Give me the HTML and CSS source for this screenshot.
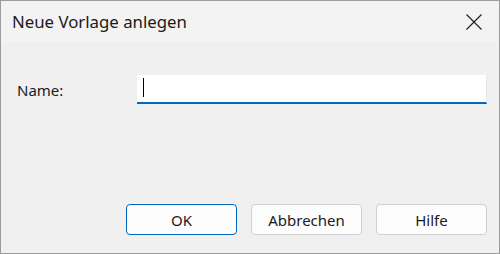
FILE: index.html
```html
<!DOCTYPE html>
<html lang="de">
<head>
    <meta charset="UTF-8">
    <meta name="viewport" content="width=device-width, initial-scale=1.0">
    <title>Neue Vorlage anlegen</title>
    <link rel="stylesheet" href="styles.css">
</head>
<body>

    <div class="dialog">

        <div class="titlebar">
            <span class="title">Neue Vorlage anlegen</span>
            <button class="close" type="button" aria-label="Schließen">
                <svg width="16" height="16" viewBox="0 0 16 16">
                    <path d="M0.5 0.5 L15.5 15.5 M15.5 0.5 L0.5 15.5" stroke="#1a1a1a" stroke-width="1.1" fill="none"/>
                </svg>
            </button>
        </div>

        <form class="content" action="#" method="post">
            <div class="field">
                <label for="name">Name:</label>
                <div class="input-box">
                    <span class="caret"></span>
                    <input type="text" name="name" id="name">
                </div>
            </div>

            <div class="buttons">
                <button type="submit" class="btn default">OK</button>
                <button type="button" class="btn">Abbrechen</button>
                <button type="button" class="btn">Hilfe</button>
            </div>
        </form>
    </div>

</body>
</html>
```

FILE: styles.css
```css
html, body{
    margin: 0;
    padding: 0;
}

body{
    font-family: "Noto Sans", "Open Sans", sans-serif;
    color: #1a1a1a;
}

.dialog{
    box-sizing: border-box;
    width: 500px;
    height: 254px;
    border: 1px solid #9c9c9c;
    background-color: #f0f0f0;
    display: flex;
    flex-direction: column;
}

.titlebar{
    height: 41px;
    background-color: #f3f3f3;
    display: flex;
    align-items: center;
    justify-content: space-between;
    padding-left: 11px;
    padding-right: 17px;
}

.title{
    font-size: 16.8px;
    margin-top: -1px;
}

.close{
    background: none;
    border: none;
    padding: 0;
    width: 16px;
    height: 16px;
    display: flex;
}

.content{
    flex: 1;
    display: flex;
    flex-direction: column;
    justify-content: space-between;
    padding: 33px 12px 18px 16px;
}

.field{
    display: flex;
    align-items: center;
}

.field label{
    width: 120px;
    font-size: 15px;
}

.input-box{
    position: relative;
    flex: 1;
    height: 27px;
    background-color: #fff;
    border-right: 1px solid #e3e6ea;
    border-bottom: 2px solid #0067c0;
}

.input-box input{
    box-sizing: border-box;
    width: 100%;
    height: 100%;
    border: none;
    background: transparent;
    padding: 0 6px;
    font: inherit;
}

.input-box input:focus{
    outline: none;
}

.caret{
    position: absolute;
    left: 6px;
    top: 3px;
    width: 1px;
    height: 19px;
    background-color: #000;
}

.buttons{
    display: flex;
    justify-content: flex-end;
    gap: 14px;
}

.btn{
    box-sizing: border-box;
    width: 111px;
    height: 31px;
    background-color: #fdfdfd;
    border: 1px solid #d0d0d0;
    border-radius: 4px;
    font-family: "Noto Sans", "Open Sans", sans-serif;
    font-size: 15px;
    color: #1a1a1a;
    padding: 0;
}

.btn.default{
    border-color: #0067c0;
}
```
